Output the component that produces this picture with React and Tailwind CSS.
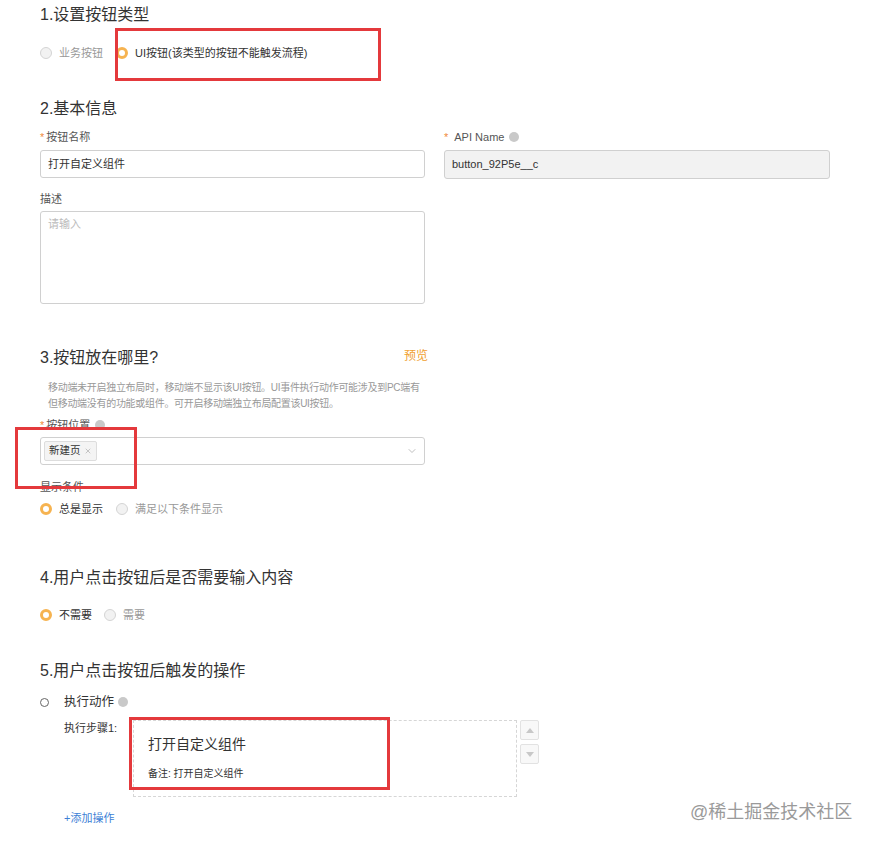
import { ChevronDown, X } from 'lucide-react';

const font = { fontFamily: '"Liberation Sans", "Noto Sans CJK SC", sans-serif' };

const Radio = ({ checked, label }) => (
  <label className="flex items-center gap-[7px] h-[20px]">
    {checked ? (
      <span className="w-[12px] h-[12px] rounded-full border-[3px] border-[#f6b350] bg-white" />
    ) : (
      <span className="w-[12px] h-[12px] rounded-full border border-[#d4d4d4] bg-[#f2f2f2]" />
    )}
    <span className={`text-[11px] ${checked ? 'text-[#333]' : 'text-[#999]'}`}>{label}</span>
  </label>
);

const Help = ({ className = 'ml-[5px]' }) => (
  <span className={`inline-block w-[10px] h-[10px] rounded-full bg-[#c9c9c9] ${className}`} />
);

const Annot = ({ className }) => (
  <div className={`absolute border-[3px] border-[#e4393c] pointer-events-none ${className}`} />
);

export default function App() {
  return (
    <div className="relative w-[875px] h-[846px] bg-white overflow-hidden" style={font}>
      <div className="pl-[40px] pt-[4px]">
        {/* 1 */}
        <h2 className="text-[16px] leading-[22px] text-[#333]">1.设置按钮类型</h2>
        <div className="mt-[17px] flex gap-[13px]">
          <Radio label="业务按钮" />
          <Radio checked label="UI按钮(该类型的按钮不能触发流程)" />
        </div>

        {/* 2 */}
        <h2 className="mt-[35px] text-[16px] leading-[22px] text-[#333]">2.基本信息</h2>
        <div className="mt-[8px] flex gap-[19px]">
          <div className="w-[385px]">
            <div className="text-[11px] leading-[18px] text-[#555]">
              <span className="text-[#f08a3c] mr-[2px]">*</span>按钮名称
            </div>
            <div className="mt-[4px] h-[28px] border border-[#d0d0d0] rounded-[3px] flex items-center px-[7px] text-[11px] text-[#333]">
              打开自定义组件
            </div>
          </div>
          <div className="w-[386px]">
            <div className="text-[11px] leading-[18px] text-[#555] flex items-center">
              <span className="text-[#f08a3c] mr-[6px]">*</span>API Name
              <Help />
            </div>
            <div className="mt-[4px] h-[29px] border border-[#d0d0d0] rounded-[3px] bg-[#f2f2f2] flex items-center px-[7px] text-[11px] text-[#333]">
              button_92P5e__c
            </div>
          </div>
        </div>
        <div className="mt-[11px] text-[11px] leading-[18px] text-[#555]">描述</div>
        <div className="mt-[3px] w-[385px] h-[93px] border border-[#d0d0d0] rounded-[3px] px-[7px] pt-[4px] text-[11px] text-[#bbb]">
          请输入
        </div>

        {/* 3 */}
        <div className="mt-[43px] w-[388px] flex justify-between items-start">
          <h2 className="text-[16px] leading-[22px] text-[#333]">3.按钮放在哪里?</h2>
          <span className="text-[12px] text-[#f0a030]">预览</span>
        </div>
        <p className="mt-[11px] pl-[8px] text-[10px] leading-[16px] text-[#999] whitespace-nowrap tracking-[-0.3px]">
          移动端未开启独立布局时，移动端不显示该UI按钮。UI事件执行动作可能涉及到PC端有
          <br />
          但移动端没有的功能或组件。可开启移动端独立布局配置该UI按钮。
        </p>
        <div className="mt-[4px] text-[11px] leading-[18px] text-[#555] flex items-center">
          <span className="text-[#f08a3c] mr-[2px]">*</span>按钮位置
          <Help />
        </div>
        <div className="mt-[3px] w-[385px] h-[28px] border border-[#d0d0d0] rounded-[3px] flex items-center justify-between pl-[3px] pr-[6px]">
          <span className="h-[20px] px-[4px] bg-[#f4f4f4] border border-[#ddd] rounded-[2px] flex items-center gap-[3px] text-[10.5px] text-[#333]">
            新建页
            <X className="w-[8px] h-[8px] text-[#aaa]" />
          </span>
          <ChevronDown className="w-[12px] h-[12px] text-[#aaa]" strokeWidth={1.5} />
        </div>
        <div className="mt-[13px] text-[11px] leading-[18px] text-[#555]">显示条件</div>
        <div className="mt-[3px] flex gap-[13px]">
          <Radio checked label="总是显示" />
          <Radio label="满足以下条件显示" />
        </div>

        {/* 4 */}
        <h2 className="mt-[48px] text-[16px] leading-[22px] text-[#333]">4.用户点击按钮后是否需要输入内容</h2>
        <div className="mt-[16px] flex gap-[12px]">
          <Radio checked label="不需要" />
          <Radio label="需要" />
        </div>

        {/* 5 */}
        <h2 className="mt-[35px] text-[16px] leading-[22px] text-[#333]">5.用户点击按钮后触发的操作</h2>
        <div className="mt-[10px] h-[20px] flex items-center">
          <span className="w-[9px] h-[9px] rounded-full border border-[#666]" />
          <span className="ml-[15px] text-[12.5px] text-[#333]">执行动作</span>
          <Help className="ml-[4px]" />
        </div>
        <div className="mt-[8px] pl-[24px] flex">
          <div className="w-[69px] text-[11px] text-[#333] leading-[16px]">执行步骤1:</div>
          <div className="w-[384px] h-[77px] border border-dashed border-[#d6d6d6] pl-[14px] pt-[13px]">
            <div className="text-[14px] leading-[20px] text-[#333]">打开自定义组件</div>
            <div className="mt-[13px] text-[10px] leading-[14px] text-[#333]">备注: 打开自定义组件</div>
          </div>
          <div className="ml-[3px] flex flex-col gap-[4px]">
            <div className="w-[19px] h-[20px] border border-[#e2e2e2] rounded-[2px] bg-[#f8f8f8] flex items-center justify-center">
              <span className="w-0 h-0 border-x-[4px] border-x-transparent border-b-[5px] border-b-[#c8c8c8]" />
            </div>
            <div className="w-[19px] h-[20px] border border-[#e2e2e2] rounded-[2px] bg-[#f8f8f8] flex items-center justify-center">
              <span className="w-0 h-0 border-x-[4px] border-x-transparent border-t-[5px] border-t-[#c8c8c8]" />
            </div>
          </div>
        </div>
        <div className="mt-[13px] pl-[24px] text-[11px] text-[#3d7fd6]">+添加操作</div>
      </div>

      {/* annotations */}
      <Annot className="left-[115px] top-[28px] w-[266px] h-[53px]" />
      <Annot className="left-[15px] top-[427px] w-[122px] h-[62px]" />
      <Annot className="left-[129px] top-[717px] w-[261px] h-[73px]" />

      <div className="absolute left-[690px] top-[800px] text-[18px] leading-[24px] text-[#9a9a9a]">@稀土掘金技术社区</div>
    </div>
  );
}
